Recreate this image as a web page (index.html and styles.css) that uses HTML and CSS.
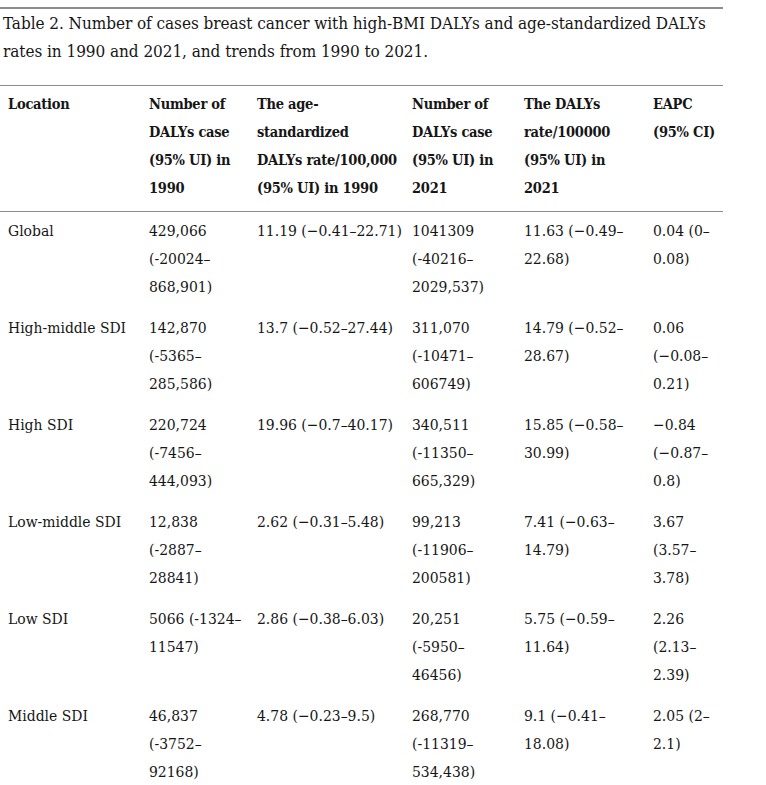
FILE: index.html
```html
<!DOCTYPE html>
<html lang="en">
<head>
<meta charset="utf-8">
<title>Table 2</title>
<link rel="stylesheet" href="styles.css">
</head>
<body>
<div class="wrap">
  <p class="caption">Table 2. Number of cases breast cancer with high-BMI DALYs and age-standardized DALYs rates in 1990 and 2021, and trends from 1990 to 2021.</p>
  <table class="data">
    <colgroup>
      <col class="c1"><col class="c2"><col class="c3"><col class="c4"><col class="c5"><col class="c6">
    </colgroup>
    <thead>
      <tr>
        <th><span class="ln">Location</span></th>
        <th><span class="ln">Number of</span><span class="ln">DALYs case</span><span class="ln">(95% UI) in</span><span class="ln">1990</span></th>
        <th><span class="ln">The age-</span><span class="ln">standardized</span><span class="ln">DALYs rate/100,000</span><span class="ln">(95% UI) in 1990</span></th>
        <th><span class="ln">Number of</span><span class="ln">DALYs case</span><span class="ln">(95% UI) in</span><span class="ln">2021</span></th>
        <th><span class="ln">The DALYs</span><span class="ln">rate/100000</span><span class="ln">(95% UI) in</span><span class="ln">2021</span></th>
        <th><span class="ln">EAPC</span><span class="ln">(95% CI)</span></th>
      </tr>
    </thead>
    <tbody>
      <tr>
        <td>Global</td>
        <td>429,066 (-20024–868,901)</td>
        <td>11.19 (−0.41–22.71)</td>
        <td class="n4">1041309 (-40216–2029,537)</td>
        <td>11.63 (−0.49–22.68)</td>
        <td>0.04 (0–0.08)</td>
      </tr>
      <tr>
        <td>High-middle SDI</td>
        <td>142,870 (-5365–285,586)</td>
        <td>13.7 (−0.52–27.44)</td>
        <td class="n4">311,070 (-10471–606749)</td>
        <td>14.79 (−0.52–28.67)</td>
        <td>0.06 (−0.08–0.21)</td>
      </tr>
      <tr>
        <td>High SDI</td>
        <td>220,724 (-7456–444,093)</td>
        <td>19.96 (−0.7–40.17)</td>
        <td class="n4">340,511 (-11350–665,329)</td>
        <td>15.85 (−0.58–30.99)</td>
        <td>−0.84 (−0.87–0.8)</td>
      </tr>
      <tr>
        <td>Low-middle SDI</td>
        <td>12,838 (-2887–28841)</td>
        <td>2.62 (−0.31–5.48)</td>
        <td class="n4">99,213 (-11906–200581)</td>
        <td>7.41 (−0.63–14.79)</td>
        <td>3.67 (3.57–3.78)</td>
      </tr>
      <tr>
        <td>Low SDI</td>
        <td>5066 (-1324–11547)</td>
        <td>2.86 (−0.38–6.03)</td>
        <td class="n4">20,251 (-5950–46456)</td>
        <td>5.75 (−0.59–11.64)</td>
        <td>2.26 (2.13–2.39)</td>
      </tr>
      <tr>
        <td>Middle SDI</td>
        <td>46,837 (-3752–92168)</td>
        <td>4.78 (−0.23–9.5)</td>
        <td class="n4">268,770 (-11319–534,438)</td>
        <td>9.1 (−0.41–18.08)</td>
        <td>2.05 (2–2.1)</td>
      </tr>
    </tbody>
  </table>
</div>
</body>
</html>
```
FILE: styles.css
```css
html, body {
  margin: 0;
  padding: 0;
  background: #ffffff;
}
body {
  font-family: "DejaVu Serif Condensed", "DejaVu Serif", serif;
  color: #161616;
}
.wrap {
  width: 723px;
  margin-top: 7px;
  border-top: 2px solid #8c8c8c;
}
.caption {
  margin: 0 0 20px 0;
  padding-left: 3px;
  font-size: 17px;
  letter-spacing: -0.05px;
  line-height: 28px;
}
.data {
  width: 723px;
  border-collapse: collapse;
  table-layout: fixed;
  font-size: 15.5px;
  line-height: 28px;
}
.data thead tr {
  border-top: 1px solid #8c8c8c;
  border-bottom: 1px solid #8c8c8c;
}
.data th {
  text-align: left;
  vertical-align: top;
  font-weight: bold;
  font-size: 14.5px;
  letter-spacing: -0.25px;
  padding: 4px 0 9px 8px;
}
.ln {
  display: block;
  white-space: nowrap;
}
.data td {
  vertical-align: top;
  padding: 5px 0 8px 8px;
}
.data td.n4 {
  padding-right: 5px;
}
.c1 { width: 141px; }
.c2 { width: 108px; }
.c3 { width: 155px; }
.c4 { width: 112px; }
.c5 { width: 129px; }
.c6 { width: 78px; }
```
